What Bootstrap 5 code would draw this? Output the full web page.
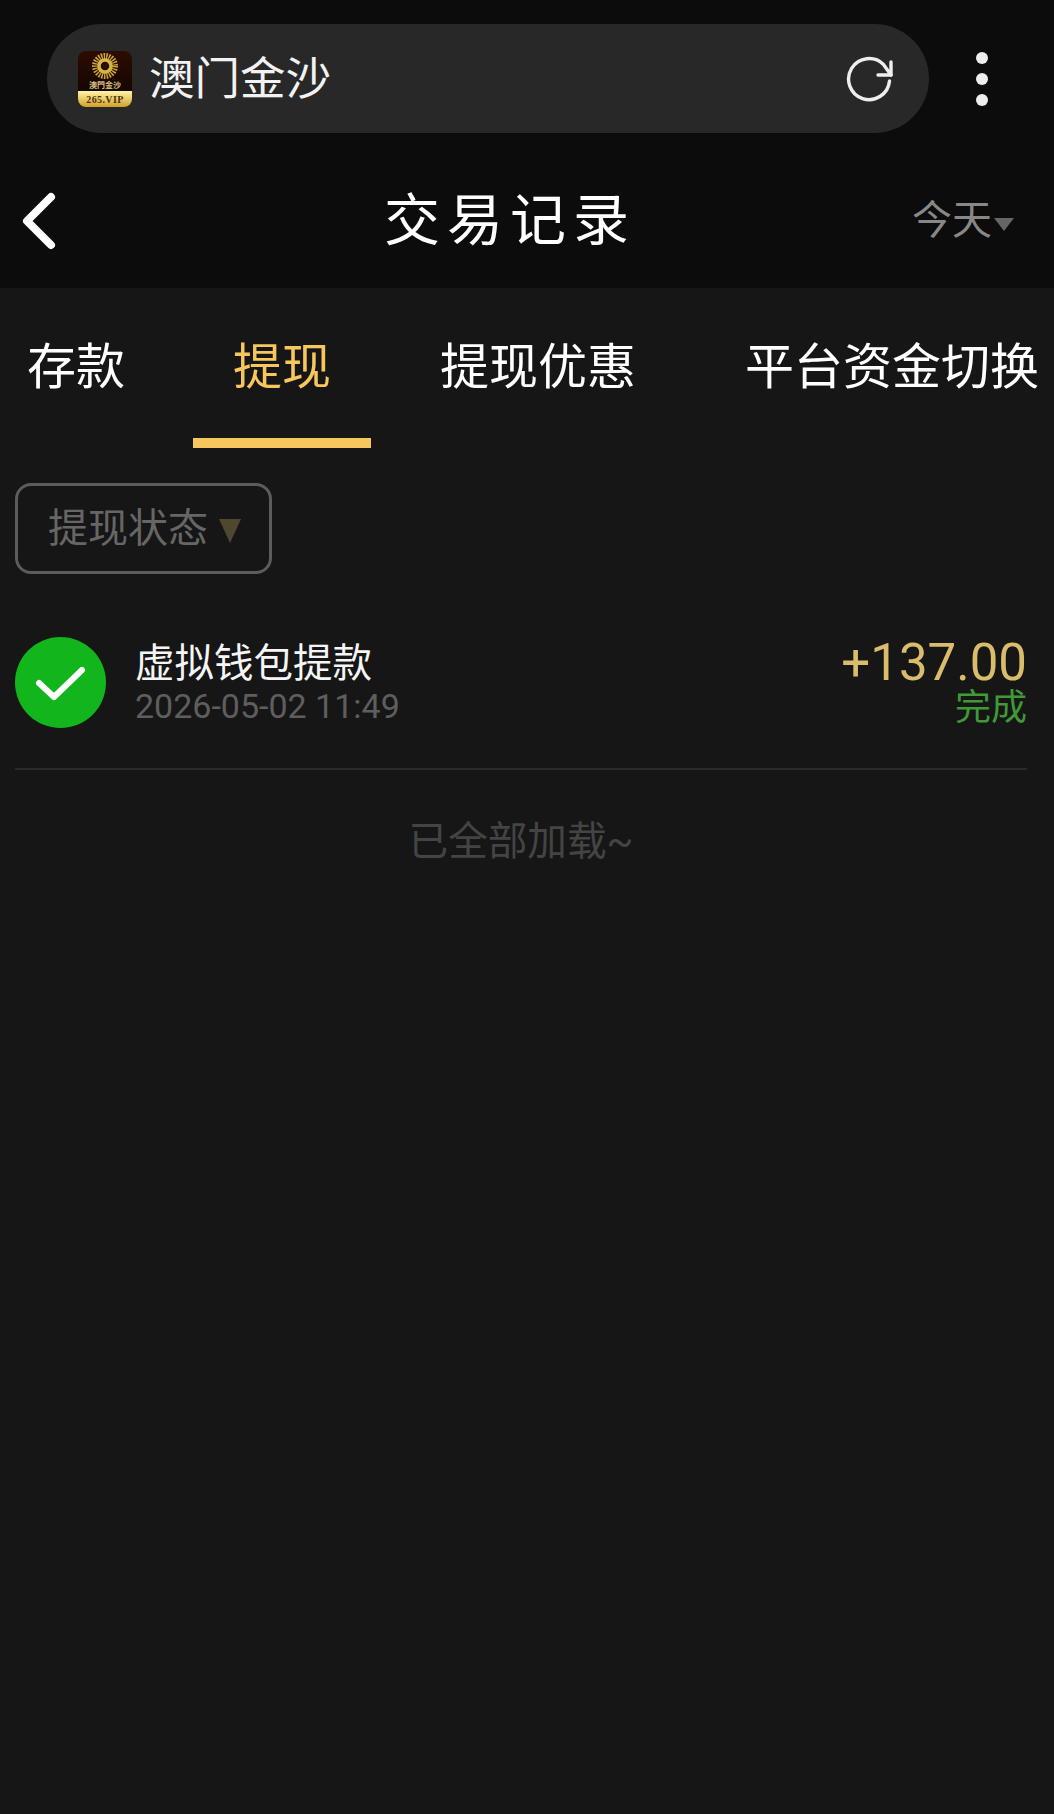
<!DOCTYPE html>
<html lang="zh">
<head>
<meta charset="UTF-8">
<title>交易记录</title>
<link href="https://cdn.jsdelivr.net/npm/bootstrap@5.3.0/dist/css/bootstrap.min.css" rel="stylesheet">
<style>
    html, body { height: 100%; }
    body { background: #161616; font-family: Roboto, "Noto Sans CJK SC", sans-serif; color: #fff; }
    .top-head { background: #0c0c0c; height: 288px; }
    .addr-row { height: 157px; padding: 24px 0 0 47px; }
    .addr-pill { width: 882px; height: 109px; background: #282828; border-radius: 55px; padding: 0 36px 0 31px; }
    .app-logo { width: 54px; height: 56px; margin-right: 17px; }
    .addr-title { font-size: 45.5px; line-height: 56px; color: #f2f2f2; padding-top: 3px; }
    .more-dots { width: 12px; margin: 28px 0 0 47px; gap: 9px; }
    .more-dots span { width: 12px; height: 12px; border-radius: 50%; background: #eee; }
    .title-row { height: 131px; padding: 0 40px 4px 21px; }
    .page-title { font-size: 56px; letter-spacing: 7px; line-height: 1; color: #fff; }
    .title-abs { left: 0; right: 0; top: 0; bottom: 4px; padding-right: 34px; }
    .day-pick { font-size: 40px; color: #888; line-height: 1; }
    .tri-down { width: 0; height: 0; border-left: 10px solid transparent; border-right: 10px solid transparent; border-top: 13px solid #666; margin: 8px 0 0 2px; }
    .tab-row { height: 160px; }
    .tab-item { font-size: 49px; line-height: 1; height: 160px; padding-top: 55px; color: #fff; white-space: nowrap; }
    .tab-cun { margin-left: 27px; }
    .tab-ti { margin-left: 68px; width: 178px; text-align: center; color: #f7c65c; border-bottom: 10px solid #f7c65c; }
    .tab-you { margin-left: 69px; }
    .tab-ping { margin-left: 109px; }
    .filter-btn { margin: 35px 0 0 15px; width: 257px; height: 91px; border: 3px solid #5c5c5c; border-radius: 16px; font-size: 40px; color: #666; padding-left: 30px; }
    .filter-tri { width: 0; height: 0; border-left: 11px solid transparent; border-right: 11px solid transparent; border-top: 24px solid #4f4830; margin-left: 11px; margin-top: 4px; }
    .rec-row { margin: 63px 27px 0 15px; height: 133px; border-bottom: 2px solid #2a2a2a; padding-bottom: 40px; }
    .ok-icon { width: 91px; height: 91px; margin-right: 29px; }
    .rec-name { font-size: 39.5px; line-height: 46px; color: #f5f5f5; }
    .rec-time { font-size: 34px; line-height: 38px; color: #5e5e5e; }
    .rec-amt { font-size: 51px; line-height: 50px; color: #d9bd6c; }
    .rec-state { font-size: 36px; line-height: 40px; color: #3f9a36; }
    .load-end { font-size: 39.6px; color: #444; margin-top: 52px; line-height: 1; padding-right: 12px; }
</style>
</head>
<body>
<div class="top-head">
    <div class="addr-row d-flex align-items-start">
        <div class="addr-pill d-flex align-items-center">
            <svg class="app-logo flex-shrink-0" viewBox="0 0 54 56">
                <defs>
                    <linearGradient id="lg1" x1="0" y1="0" x2="0" y2="1"><stop offset="0" stop-color="#2e0c00"/><stop offset="1" stop-color="#0a0402"/></linearGradient>
                    <linearGradient id="lg2" x1="0" y1="0" x2="0" y2="1"><stop offset="0" stop-color="#fff4a8"/><stop offset="1" stop-color="#d4a02a"/></linearGradient>
                </defs>
                <rect width="54" height="56" rx="8" fill="url(#lg1)"/>
                <path d="M0 40H54V48a8 8 0 0 1-8 8H8a8 8 0 0 1-8-8Z" fill="url(#lg2)"/>
                <circle cx="27" cy="15" r="9.5" fill="none" stroke="#c9a437" stroke-width="7" stroke-dasharray="1.4 1"/>
                <circle cx="27" cy="15" r="6" fill="none" stroke="#d8b440" stroke-width="3.5"/>
                <circle cx="27" cy="15" r="2.6" fill="#2a1004"/>
                <text x="27" y="36.5" text-anchor="middle" font-size="8" font-weight="700" fill="#d8c080" font-family="Noto Sans CJK TC">澳門金沙</text>
                <text x="27" y="52" text-anchor="middle" font-size="10" font-weight="700" letter-spacing=".4" fill="#4a3208" font-family="Liberation Serif">265.VIP</text>
            </svg>
            <span class="addr-title">澳门金沙</span>
            <svg class="ms-auto flex-shrink-0" width="48" height="46" viewBox="0 0 48 46" fill="none" stroke="#eee" stroke-width="3.4" stroke-linecap="round" stroke-linejoin="round">
                <path d="M44.5 25A20.5 20.5 0 1 1 38.5 8.5L46 19"/>
                <path d="M46 6V19H33"/>
            </svg>
        </div>
        <div class="more-dots d-flex flex-column"><span></span><span></span><span></span></div>
    </div>
    <div class="title-row d-flex align-items-center justify-content-between position-relative">
        <svg width="36" height="58" viewBox="0 0 36 58" fill="none" stroke="#fff" stroke-width="8" stroke-linecap="round" stroke-linejoin="round">
            <path d="M30 5L6 29L30 53"/>
        </svg>
        <div class="title-abs position-absolute d-flex align-items-center justify-content-center"><span class="page-title">交易记录</span></div>
        <div class="day-pick d-flex align-items-center"><span>今天</span><span class="tri-down"></span></div>
    </div>
</div>
<div class="tab-row d-flex">
    <div class="tab-item tab-cun">存款</div>
    <div class="tab-item tab-ti">提现</div>
    <div class="tab-item tab-you">提现优惠</div>
    <div class="tab-item tab-ping">平台资金切换</div>
</div>
<div class="filter-btn d-flex align-items-center"><span>提现状态</span><span class="filter-tri"></span></div>
<div class="rec-row d-flex align-items-center">
    <svg class="ok-icon flex-shrink-0" viewBox="0 0 91 91">
        <circle cx="45.5" cy="45.5" r="45.5" fill="#12b51b"/>
        <path d="M24 46L39 60L67 33" fill="none" stroke="#fff" stroke-width="6" stroke-linecap="round" stroke-linejoin="round"/>
    </svg>
    <div class="flex-grow-1">
        <div class="rec-name">虚拟钱包提款</div>
        <div class="rec-time">2026-05-02 11:49</div>
    </div>
    <div class="text-end">
        <div class="rec-amt">+137.00</div>
        <div class="rec-state">完成</div>
    </div>
</div>
<div class="load-end text-center">已全部加载~</div>
</body>
</html>
